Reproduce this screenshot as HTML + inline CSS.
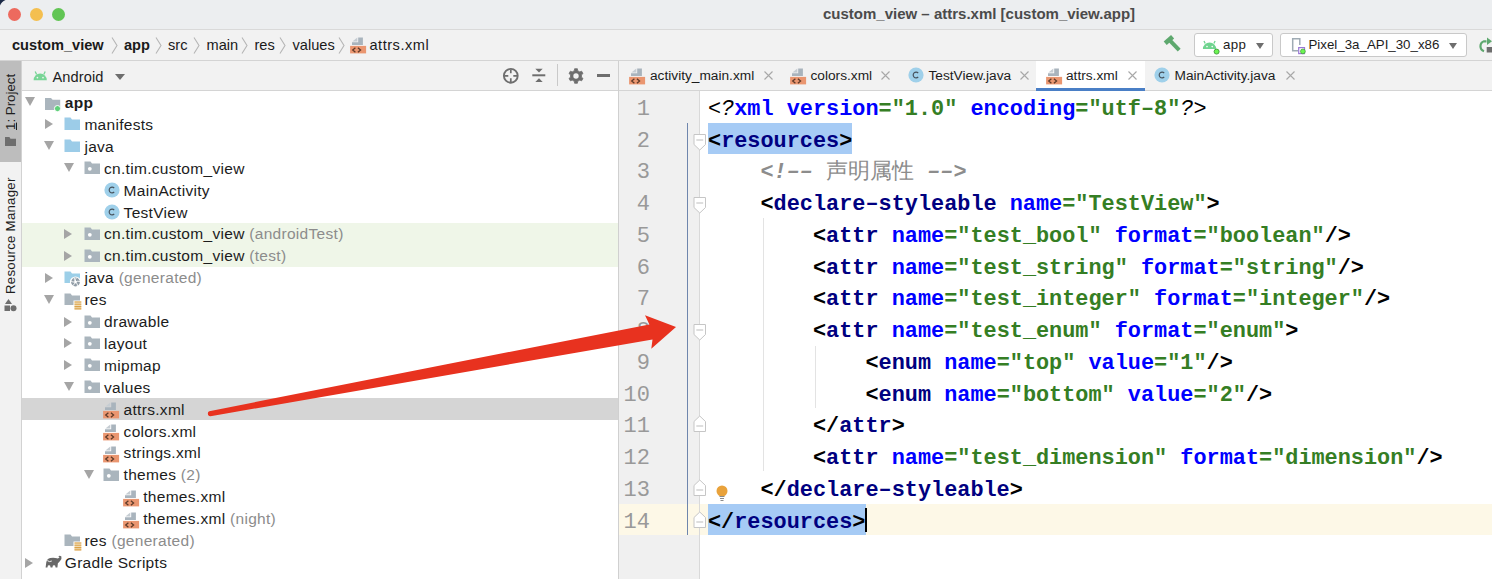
<!DOCTYPE html>
<html><head><meta charset="utf-8">
<style>
*{margin:0;padding:0;box-sizing:border-box}
html,body{width:1492px;height:579px;overflow:hidden}
body{position:relative;background:#fff;font-family:"Liberation Sans",sans-serif;color:#000}
.a{position:absolute}
.hl{position:absolute;height:1px}
.vl{position:absolute;width:1px}
/* title */
#title{left:0;top:0;width:1492px;height:30px;background:#eceef0}
.tl{position:absolute;top:7.7px;width:13px;height:13px;border-radius:50%}
#ttext{left:823px;top:3px;font-size:15px;font-weight:700;color:#4b4b4b;line-height:22px;white-space:pre}
/* nav */
#nav{left:0;top:30px;width:1492px;height:30px;background:#f2f2f2}
.bc{position:absolute;top:30px;height:30px;line-height:30px;font-size:14.6px;white-space:pre;color:#1a1a1a}
.chev{position:absolute;top:37px;width:7px;height:17px}
/* left strip */
#strip{left:0;top:61px;width:21px;height:518px;background:#f2f2f2}
/* panel header */
#phead{left:22px;top:61px;width:596px;height:29px;background:#f2f2f2}
#tree{left:22px;top:91px;width:596px;height:488px;background:#fff}
.row{position:absolute;left:22px;width:596px;height:22px}
.tt{position:absolute;font-size:15.5px;letter-spacing:0.3px;line-height:22px;white-space:pre;color:#1c1c1c}
.tt i{font-style:normal;color:#8c8c8c}
.arr{position:absolute;width:0;height:0}
.ad{border-left:5px solid transparent;border-right:5px solid transparent;border-top:9px solid #a5a5a5}
.ar{border-top:5px solid transparent;border-bottom:5px solid transparent;border-left:8px solid #a5a5a5}
.ic{position:absolute}
/* editor */
#tabs{left:619px;top:61px;width:873px;height:29px;background:#f2f2f2}
.tab{position:absolute;top:61px;height:29px;line-height:29px;font-size:13.7px;white-space:pre;color:#1c1c1c}
.x{position:absolute;top:71px;width:9px;height:9px}
#gutter{left:619px;top:91px;width:80px;height:488px;background:#f0f0f0}
.ln{position:absolute;left:619px;width:31px;text-align:right;font-family:"Liberation Mono",monospace;font-size:22px;font-weight:400;color:#999;line-height:31.75px;height:31.75px}
.code{position:absolute;left:708px;font-family:"Liberation Mono",monospace;font-size:21.875px;line-height:31.75px;height:31.75px;white-space:pre;color:#000;font-weight:700}
.p{font-weight:700}
.t{color:#000080}
.n{color:#0000ff}
.v{color:#357e24}
.c{color:#8c8c8c;font-style:italic;font-weight:700}
.it{font-style:italic;font-weight:400}
</style></head><body>

<!-- TITLE BAR -->
<div id="title" class="a"></div>
<svg class="a" style="left:0;top:0" width="8" height="8"><path d="M0 0H5.5Q1.5 1.5 0 5.5Z" fill="#1b2a47"/></svg>
<div class="tl" style="left:7.7px;background:#ed6a5e"></div>
<div class="tl" style="left:29.5px;background:#f4bf4f"></div>
<div class="tl" style="left:51.5px;background:#61c554"></div>
<div id="ttext" class="a">custom_view – attrs.xml [custom_view.app]</div>
<div class="hl" style="left:0;top:29px;width:1492px;background:#d9d9d9"></div>

<!-- NAV BAR -->
<div id="nav" class="a"></div>
<div class="bc" style="left:12px;font-weight:700">custom_view</div><svg class="a" style="left:110.5px;top:36px" width="8" height="19"><path d="M1 1.5L6 9.5L1 17.5" stroke="#b5b5b5" stroke-width="1.1" fill="none"/></svg><div class="bc" style="left:124px;font-weight:700">app</div><svg class="a" style="left:155px;top:36px" width="8" height="19"><path d="M1 1.5L6 9.5L1 17.5" stroke="#b5b5b5" stroke-width="1.1" fill="none"/></svg><div class="bc" style="left:168px">src</div><svg class="a" style="left:193px;top:36px" width="8" height="19"><path d="M1 1.5L6 9.5L1 17.5" stroke="#b5b5b5" stroke-width="1.1" fill="none"/></svg><div class="bc" style="left:206.5px">main</div><svg class="a" style="left:241px;top:36px" width="8" height="19"><path d="M1 1.5L6 9.5L1 17.5" stroke="#b5b5b5" stroke-width="1.1" fill="none"/></svg><div class="bc" style="left:254.5px">res</div><svg class="a" style="left:278.5px;top:36px" width="8" height="19"><path d="M1 1.5L6 9.5L1 17.5" stroke="#b5b5b5" stroke-width="1.1" fill="none"/></svg><div class="bc" style="left:292.5px">values</div><svg class="a" style="left:338px;top:36px" width="8" height="19"><path d="M1 1.5L6 9.5L1 17.5" stroke="#b5b5b5" stroke-width="1.1" fill="none"/></svg><svg class="a" style="left:350px;top:37px" width="17" height="17" viewBox="0 0 17 17"><path d="M8.2 0.4H12.9V8.1H2V5.2H8.2Z" fill="#a9b4bd"/><path d="M2.4 4.5L7.3 0.4V4.5Z" fill="#c6cdd3"/><rect x="0.1" y="8.9" width="16" height="7.5" fill="#ea9670"/><path d="M5.4 10.7L2.7 13L5.4 15.3M7.9 10.7L10.6 13L7.9 15.3" stroke="#5d3a28" stroke-width="1.25" fill="none"/></svg><div class="bc" style="left:369.5px;letter-spacing:0.5px">attrs.xml</div><svg class="a" style="left:1162px;top:34px" width="20" height="20" viewBox="0 0 20 20"><path d="M3.2 9.3L10.6 2.8" stroke="#5ea86e" stroke-width="4.6"/><path d="M8.3 6.8L17.2 16.2" stroke="#5ea86e" stroke-width="4"/></svg><div class="a" style="left:1193.5px;top:33px;width:79px;height:24px;background:#fff;border:1px solid #c9c9c9;border-radius:3px"></div><svg class="a" style="left:1200px;top:38px" width="22" height="18" viewBox="0 0 22 18"><path d="M2.9 11A6.65 6.4 0 0 1 16.2 11Z" fill="#6fd48f"/><path d="M5.2 5.5L4 3M13.9 5.5L15.1 3" stroke="#6fd48f" stroke-width="1.3"/><circle cx="7" cy="8.6" r="0.8" fill="#fff"/><circle cx="12.2" cy="8.6" r="0.8" fill="#fff"/><circle cx="16.6" cy="13.6" r="2.5" fill="#6cf552" stroke="#3f9a3a" stroke-width="0.9"/></svg><div class="a" style="left:1223px;top:33px;height:24px;line-height:24px;font-size:13.3px;letter-spacing:0.3px;color:#1c1c1c">app</div><div class="a" style="left:1255.5px;top:42.5px;border-left:4.5px solid transparent;border-right:4.5px solid transparent;border-top:6px solid #6e6e6e;width:0;height:0"></div><div class="a" style="left:1280px;top:33px;width:186.5px;height:24px;background:#fff;border:1px solid #c9c9c9;border-radius:3px"></div><svg class="a" style="left:1290px;top:36px" width="18" height="20" viewBox="0 0 18 20"><path d="M9.8 9V2.8H2.7V14.8H8" stroke="#9fabb4" stroke-width="1.5" fill="none"/><rect x="8.7" y="11.6" width="5.8" height="6" fill="#fff" stroke="#9a78d6" stroke-width="1.2"/><circle cx="12.9" cy="15.4" r="2.4" fill="#6cf552" stroke="#3f9a3a" stroke-width="0.7"/></svg><div class="a" style="left:1308.5px;top:33px;height:24px;line-height:24px;font-size:13.3px;color:#1c1c1c">Pixel_3a_API_30_x86</div><div class="a" style="left:1449px;top:42.5px;border-left:4.5px solid transparent;border-right:4.5px solid transparent;border-top:6px solid #6e6e6e;width:0;height:0"></div><svg class="a" style="left:1476px;top:36px" width="16" height="18" viewBox="0 0 16 18"><path d="M10.5 5.3H8A5.3 5.3 0 0 0 8 15.3" stroke="#5ea86e" stroke-width="2.2" fill="none"/><path d="M11 1.5L16 5.3L11 9Z" fill="#5ea86e"/><rect x="10.7" y="11" width="6" height="5.5" fill="#6e6e6e"/></svg>
<div class="hl" style="left:0;top:60px;width:1492px;background:#d4d4d4"></div>

<div id="strip" class="a"></div><div class="a" style="left:0;top:61px;width:21px;height:101px;background:#bdbdbd"></div><div class="vl" style="left:21px;top:61px;height:518px;background:#d2d2d2"></div><div class="a" style="left:2px;top:130px;width:58px;height:17px;transform-origin:0 0;transform:rotate(-90deg);font-size:13.3px;line-height:17px;color:#1e1e1e;white-space:pre"><u>1</u>: Project</div><div class="a" style="left:5px;top:137px;width:11px;height:9px;background:#6e6e6e;clip-path:polygon(0 0,40% 0,50% 20%,100% 20%,100% 100%,0 100%)"></div><div class="a" style="left:2px;top:294px;width:117px;height:17px;transform-origin:0 0;transform:rotate(-90deg);font-size:13.3px;line-height:17px;color:#1e1e1e;white-space:pre;letter-spacing:0.22px">Resource Manager</div><svg class="a" style="left:4px;top:299px" width="13" height="13" viewBox="0 0 13 13"><path d="M4.5 0L8 5H1Z" fill="#6e6e6e"/><rect x="0.5" y="6.5" width="5.5" height="5.5" fill="#6e6e6e"/><circle cx="9.5" cy="9.3" r="3" fill="#6e6e6e"/></svg><div id="phead" class="a"></div><div class="hl" style="left:22px;top:90px;width:597px;background:#d4d4d4"></div><svg class="a" style="left:32.5px;top:70px" width="15" height="11" viewBox="0 0 15 11"><path d="M0.6 10.2A6.6 6.6 0 0 1 13.8 10.2Z" fill="#78d596"/><path d="M3.6 4.6L2.2 1.6M10.8 4.6L12.2 1.6" stroke="#78d596" stroke-width="1.3"/><circle cx="4.4" cy="7.6" r="0.85" fill="#f2f2f2"/><circle cx="10" cy="7.6" r="0.85" fill="#f2f2f2"/></svg><div class="a" style="left:52.5px;top:62.5px;height:29px;line-height:29px;font-size:14.6px;letter-spacing:0.1px;color:#1c1c1c">Android</div><div class="a" style="left:114.5px;top:74px;border-left:5px solid transparent;border-right:5px solid transparent;border-top:6px solid #6e6e6e;width:0;height:0"></div><svg class="a" style="left:502px;top:66.5px" width="18" height="18" viewBox="0 0 18 18"><circle cx="8.8" cy="8.8" r="6.9" stroke="#6e6e6e" stroke-width="1.9" fill="none"/><path d="M8.8 2.5V6.3M8.8 11.3V15.1M2.5 8.8H6.3M11.3 8.8H15.1" stroke="#6e6e6e" stroke-width="1.7"/></svg><svg class="a" style="left:531px;top:67px" width="16" height="17" viewBox="0 0 16 17"><path d="M1.3 8.3H14.3" stroke="#6e6e6e" stroke-width="2"/><path d="M4.3 1.8H11.7L8 5.6Z" fill="#6e6e6e"/><path d="M8 11.2L11.7 15H4.3Z" fill="#6e6e6e"/></svg><div class="vl" style="left:557px;top:64px;height:22px;background:#c9c9c9"></div><svg class="a" style="left:567.5px;top:67.5px" width="16" height="16" viewBox="0 0 16 16"><path d="M6.36 2.64L6.59 0.74L9.41 0.74L9.64 2.64L11.82 3.90L13.58 3.15L15.00 5.59L13.46 6.74L13.46 9.26L15.00 10.41L13.58 12.85L11.82 12.10L9.64 13.36L9.41 15.26L6.59 15.26L6.36 13.36L4.18 12.10L2.42 12.85L1.00 10.41L2.54 9.26L2.54 6.74L1.00 5.59L2.42 3.15L4.18 3.90Z" fill="#6e6e6e" stroke="#6e6e6e" stroke-width="0.8" stroke-linejoin="round"/><circle cx="8" cy="8" r="2.7" fill="#f2f2f2"/></svg><div class="a" style="left:597px;top:74.2px;width:13.2px;height:2.4px;background:#6e6e6e"></div><div id="tabs" class="a"></div><div class="vl" style="left:618px;top:61px;height:518px;background:#d0d0d0"></div><div id="tree" class="a"></div>
<!--TREE-->
<div class="arr ad" style="left:24.8px;top:97.40px"></div><svg class="a" style="left:44.5px;top:95.5px" width="18" height="17" viewBox="0 0 18 17"><path d="M0 2H6L7.6 3.8H15.2V14H0Z" fill="#aab5bd"/><circle cx="12.5" cy="12.6" r="3.1" fill="#5fd07a" stroke="#fff" stroke-width="1"/></svg><div class="tt" style="left:64.8px;top:92.00px"><b>app</b></div>
<div class="arr ar" style="left:44.5px;top:119.41px"></div><svg class="a" style="left:64.1px;top:117.41px" width="17" height="14" viewBox="0 0 17 14"><path d="M0.5 0.5H6.5L8 2.5H16V13H0.5Z" fill="#9ccce8"/></svg><div class="tt" style="left:84.4px;top:113.91px">manifests</div>
<div class="arr ad" style="left:44.4px;top:141.21px"></div><svg class="a" style="left:64.1px;top:139.31px" width="17" height="14" viewBox="0 0 17 14"><path d="M0.5 0.5H6.5L8 2.5H16V13H0.5Z" fill="#9ccce8"/></svg><div class="tt" style="left:84.4px;top:135.81px">java</div>
<div class="arr ad" style="left:64.0px;top:163.12px"></div><svg class="a" style="left:83.7px;top:161.22px" width="17" height="14" viewBox="0 0 17 14"><path d="M0.5 0.5H6.5L8 2.5H16V13H0.5Z" fill="#aab5bd"/><circle cx="5.8" cy="7.8" r="1.9" fill="#fff"/></svg><div class="tt" style="left:104.0px;top:157.72px">cn.tim.custom_view</div>
<svg class="a" style="left:104.0px;top:182.22px" width="16" height="16" viewBox="0 0 16 16"><circle cx="8" cy="8" r="7.6" fill="#9fd0ea"/><path d="M10.2 6A2.9 2.9 0 1 0 10.2 10" stroke="#46525c" stroke-width="1.2" fill="none"/></svg><div class="tt" style="left:123.6px;top:179.62px">MainActivity</div>
<svg class="a" style="left:104.0px;top:204.12px" width="16" height="16" viewBox="0 0 16 16"><circle cx="8" cy="8" r="7.6" fill="#9fd0ea"/><path d="M10.2 6A2.9 2.9 0 1 0 10.2 10" stroke="#46525c" stroke-width="1.2" fill="none"/></svg><div class="tt" style="left:123.6px;top:201.53px">TestView</div>
<div class="a" style="left:22px;top:223.43px;width:596px;height:22px;background:#eff6e8"></div><div class="arr ar" style="left:64.1px;top:228.93px"></div><svg class="a" style="left:83.7px;top:226.93px" width="17" height="14" viewBox="0 0 17 14"><path d="M0.5 0.5H6.5L8 2.5H16V13H0.5Z" fill="#aab5bd"/><circle cx="5.8" cy="7.8" r="1.9" fill="#fff"/></svg><div class="tt" style="left:104.0px;top:223.43px">cn.tim.custom_view<i> (androidTest)</i></div>
<div class="a" style="left:22px;top:245.34px;width:596px;height:22px;background:#eff6e8"></div><div class="arr ar" style="left:64.1px;top:250.84px"></div><svg class="a" style="left:83.7px;top:248.84px" width="17" height="14" viewBox="0 0 17 14"><path d="M0.5 0.5H6.5L8 2.5H16V13H0.5Z" fill="#aab5bd"/><circle cx="5.8" cy="7.8" r="1.9" fill="#fff"/></svg><div class="tt" style="left:104.0px;top:245.34px">cn.tim.custom_view<i> (test)</i></div>
<div class="arr ar" style="left:44.5px;top:272.74px"></div><svg class="a" style="left:64.1px;top:270.74px" width="18" height="17" viewBox="0 0 18 17"><path d="M0.5 0.5H6.5L8 2.5H16V12H0.5Z" fill="#9ccfe8"/><circle cx="11.5" cy="11" r="5.6" fill="#fff"/><circle cx="11.5" cy="11" r="4.4" fill="#8f9ba5"/><path d="M11.5 11Q11 8 12.5 6.6M11.5 11Q14 9.5 15.9 10.6M11.5 11Q14 13 13.4 15.1M11.5 11Q10.5 14 8.6 14.6M11.5 11Q8.5 11.5 7 10M11.5 11Q10 8.5 10.3 6.7" stroke="#fff" stroke-width="0.9" fill="none"/><circle cx="11.5" cy="11" r="1.2" fill="#fff"/></svg><div class="tt" style="left:84.4px;top:267.24px">java<i> (generated)</i></div>
<div class="arr ad" style="left:44.4px;top:294.54px"></div><svg class="a" style="left:64.1px;top:292.64px" width="18" height="17" viewBox="0 0 18 17"><path d="M0.5 0.5H6.5L8 2.5H16V12H0.5Z" fill="#aab5bd"/><rect x="9.5" y="7.5" width="8" height="9" fill="#fff"/><rect x="10.5" y="8.3" width="6.8" height="8" fill="#f1dcb4"/><path d="M10.5 9H17.3M10.5 11.3H17.3M10.5 13.6H17.3M10.5 15.9H17.3" stroke="#dba24a" stroke-width="1.1"/></svg><div class="tt" style="left:84.4px;top:289.14px">res</div>
<div class="arr ar" style="left:64.1px;top:316.55px"></div><svg class="a" style="left:83.7px;top:314.55px" width="17" height="14" viewBox="0 0 17 14"><path d="M0.5 0.5H6.5L8 2.5H16V13H0.5Z" fill="#aab5bd"/><circle cx="5.8" cy="7.8" r="1.9" fill="#fff"/></svg><div class="tt" style="left:104.0px;top:311.05px">drawable</div>
<div class="arr ar" style="left:64.1px;top:338.46px"></div><svg class="a" style="left:83.7px;top:336.46px" width="17" height="14" viewBox="0 0 17 14"><path d="M0.5 0.5H6.5L8 2.5H16V13H0.5Z" fill="#aab5bd"/><circle cx="5.8" cy="7.8" r="1.9" fill="#fff"/></svg><div class="tt" style="left:104.0px;top:332.96px">layout</div>
<div class="arr ar" style="left:64.1px;top:360.36px"></div><svg class="a" style="left:83.7px;top:358.36px" width="17" height="14" viewBox="0 0 17 14"><path d="M0.5 0.5H6.5L8 2.5H16V13H0.5Z" fill="#aab5bd"/><circle cx="5.8" cy="7.8" r="1.9" fill="#fff"/></svg><div class="tt" style="left:104.0px;top:354.86px">mipmap</div>
<div class="arr ad" style="left:64.0px;top:382.16px"></div><svg class="a" style="left:83.7px;top:380.26px" width="17" height="14" viewBox="0 0 17 14"><path d="M0.5 0.5H6.5L8 2.5H16V13H0.5Z" fill="#aab5bd"/><circle cx="5.8" cy="7.8" r="1.9" fill="#fff"/></svg><div class="tt" style="left:104.0px;top:376.76px">values</div>
<div class="a" style="left:22px;top:398.40px;width:596px;height:21.5px;background:#d5d5d5"></div><svg class="a" style="left:103.3px;top:402.17px" width="17" height="17" viewBox="0 0 17 17"><path d="M8.2 0.4H12.9V8.1H2V5.2H8.2Z" fill="#a9b4bd"/><path d="M2.4 4.5L7.3 0.4V4.5Z" fill="#c6cdd3"/><rect x="0.1" y="8.9" width="16" height="7.5" fill="#ea9670"/><path d="M5.4 10.7L2.7 13L5.4 15.3M7.9 10.7L10.6 13L7.9 15.3" stroke="#5d3a28" stroke-width="1.25" fill="none"/></svg><div class="tt" style="left:123.6px;top:398.67px">attrs.xml</div>
<svg class="a" style="left:103.3px;top:424.08px" width="17" height="17" viewBox="0 0 17 17"><path d="M8.2 0.4H12.9V8.1H2V5.2H8.2Z" fill="#a9b4bd"/><path d="M2.4 4.5L7.3 0.4V4.5Z" fill="#c6cdd3"/><rect x="0.1" y="8.9" width="16" height="7.5" fill="#ea9670"/><path d="M5.4 10.7L2.7 13L5.4 15.3M7.9 10.7L10.6 13L7.9 15.3" stroke="#5d3a28" stroke-width="1.25" fill="none"/></svg><div class="tt" style="left:123.6px;top:420.58px">colors.xml</div>
<svg class="a" style="left:103.3px;top:445.98px" width="17" height="17" viewBox="0 0 17 17"><path d="M8.2 0.4H12.9V8.1H2V5.2H8.2Z" fill="#a9b4bd"/><path d="M2.4 4.5L7.3 0.4V4.5Z" fill="#c6cdd3"/><rect x="0.1" y="8.9" width="16" height="7.5" fill="#ea9670"/><path d="M5.4 10.7L2.7 13L5.4 15.3M7.9 10.7L10.6 13L7.9 15.3" stroke="#5d3a28" stroke-width="1.25" fill="none"/></svg><div class="tt" style="left:123.6px;top:442.48px">strings.xml</div>
<div class="arr ad" style="left:83.6px;top:469.78px"></div><svg class="a" style="left:103.3px;top:467.88px" width="17" height="14" viewBox="0 0 17 14"><path d="M0.5 0.5H6.5L8 2.5H16V13H0.5Z" fill="#aab5bd"/><circle cx="5.8" cy="7.8" r="1.9" fill="#fff"/></svg><div class="tt" style="left:123.6px;top:464.38px">themes<i> (2)</i></div>
<svg class="a" style="left:122.9px;top:489.79px" width="17" height="17" viewBox="0 0 17 17"><path d="M8.2 0.4H12.9V8.1H2V5.2H8.2Z" fill="#a9b4bd"/><path d="M2.4 4.5L7.3 0.4V4.5Z" fill="#c6cdd3"/><rect x="0.1" y="8.9" width="16" height="7.5" fill="#ea9670"/><path d="M5.4 10.7L2.7 13L5.4 15.3M7.9 10.7L10.6 13L7.9 15.3" stroke="#5d3a28" stroke-width="1.25" fill="none"/></svg><div class="tt" style="left:143.2px;top:486.29px">themes.xml</div>
<svg class="a" style="left:122.9px;top:511.7px" width="17" height="17" viewBox="0 0 17 17"><path d="M8.2 0.4H12.9V8.1H2V5.2H8.2Z" fill="#a9b4bd"/><path d="M2.4 4.5L7.3 0.4V4.5Z" fill="#c6cdd3"/><rect x="0.1" y="8.9" width="16" height="7.5" fill="#ea9670"/><path d="M5.4 10.7L2.7 13L5.4 15.3M7.9 10.7L10.6 13L7.9 15.3" stroke="#5d3a28" stroke-width="1.25" fill="none"/></svg><div class="tt" style="left:143.2px;top:508.20px">themes.xml<i> (night)</i></div>
<svg class="a" style="left:64.1px;top:533.6px" width="18" height="17" viewBox="0 0 18 17"><path d="M0.5 0.5H6.5L8 2.5H16V12H0.5Z" fill="#aab5bd"/><rect x="9.5" y="7.5" width="8" height="9" fill="#fff"/><rect x="10.5" y="8.3" width="6.8" height="8" fill="#f1dcb4"/><path d="M10.5 9H17.3M10.5 11.3H17.3M10.5 13.6H17.3M10.5 15.9H17.3" stroke="#dba24a" stroke-width="1.1"/></svg><div class="tt" style="left:84.4px;top:530.10px">res<i> (generated)</i></div>
<div class="arr ar" style="left:24.9px;top:557.50px"></div><svg class="a" style="left:44.5px;top:554.5px" width="18" height="14" viewBox="0 0 18 14"><path d="M0.6 12.4L1.3 7.2Q2.2 3.6 5.2 3Q9 2.3 12 3.3Q13.6 3.7 14.3 2.6L14.4 1.9Q13.6 1.6 13.1 1.3Q15 0.2 16.4 1.6Q17 3.5 15.2 5.8Q13.9 7.3 12.9 8.3L12.4 12.4H10.6L10.1 10.6Q9 10.1 7.9 10.6L7.4 12.4H5.6L5.1 10.6Q4 10.1 2.9 10.6L2.4 12.4Z" fill="#676767"/><path d="M2.3 5.6Q4.5 7.4 6.8 6" stroke="#fff" stroke-width="0.9" fill="none"/></svg><div class="tt" style="left:64.8px;top:552.00px">Gradle Scripts</div>
<!--/TREE-->
<!--ED-->
<div class="a" style="left:1036px;top:61px;width:109px;height:29px;background:#fff"></div><div class="hl" style="left:619px;top:90px;width:873px;background:#d4d4d4"></div><div class="a" style="left:1036px;top:87.5px;width:109px;height:3.5px;background:#4a7fc6"></div><svg class="a" style="left:629px;top:67.5px" width="17" height="17" viewBox="0 0 17 17"><path d="M8.2 0.4H12.9V8.1H2V5.2H8.2Z" fill="#a9b4bd"/><path d="M2.4 4.5L7.3 0.4V4.5Z" fill="#c6cdd3"/><rect x="0.1" y="8.9" width="16" height="7.5" fill="#ea9670"/><path d="M5.4 10.7L2.7 13L5.4 15.3M7.9 10.7L10.6 13L7.9 15.3" stroke="#5d3a28" stroke-width="1.25" fill="none"/></svg><div class="tab" style="left:650px">activity_main.xml</div><svg class="a" style="left:763.5px;top:71px" width="9" height="9" viewBox="0 0 9 9"><path d="M0.5 0.5L8.5 8.5M8.5 0.5L0.5 8.5" stroke="#a8a8a8" stroke-width="1.1"/></svg><svg class="a" style="left:789.5px;top:67.5px" width="17" height="17" viewBox="0 0 17 17"><path d="M8.2 0.4H12.9V8.1H2V5.2H8.2Z" fill="#a9b4bd"/><path d="M2.4 4.5L7.3 0.4V4.5Z" fill="#c6cdd3"/><rect x="0.1" y="8.9" width="16" height="7.5" fill="#ea9670"/><path d="M5.4 10.7L2.7 13L5.4 15.3M7.9 10.7L10.6 13L7.9 15.3" stroke="#5d3a28" stroke-width="1.25" fill="none"/></svg><div class="tab" style="left:810.5px">colors.xml</div><svg class="a" style="left:881.3px;top:71px" width="9" height="9" viewBox="0 0 9 9"><path d="M0.5 0.5L8.5 8.5M8.5 0.5L0.5 8.5" stroke="#a8a8a8" stroke-width="1.1"/></svg><svg class="a" style="left:907.7px;top:67.1px" width="16" height="16" viewBox="0 0 16 16"><circle cx="8" cy="8" r="7.6" fill="#9fd0ea"/><path d="M10.2 6A2.9 2.9 0 1 0 10.2 10" stroke="#46525c" stroke-width="1.2" fill="none"/></svg><div class="tab" style="left:928.5px">TestView.java</div><svg class="a" style="left:1019.8px;top:71px" width="9" height="9" viewBox="0 0 9 9"><path d="M0.5 0.5L8.5 8.5M8.5 0.5L0.5 8.5" stroke="#a8a8a8" stroke-width="1.1"/></svg><svg class="a" style="left:1046px;top:67.5px" width="17" height="17" viewBox="0 0 17 17"><path d="M8.2 0.4H12.9V8.1H2V5.2H8.2Z" fill="#a9b4bd"/><path d="M2.4 4.5L7.3 0.4V4.5Z" fill="#c6cdd3"/><rect x="0.1" y="8.9" width="16" height="7.5" fill="#ea9670"/><path d="M5.4 10.7L2.7 13L5.4 15.3M7.9 10.7L10.6 13L7.9 15.3" stroke="#5d3a28" stroke-width="1.25" fill="none"/></svg><div class="tab" style="left:1066px">attrs.xml</div><svg class="a" style="left:1128px;top:71px" width="9" height="9" viewBox="0 0 9 9"><path d="M0.5 0.5L8.5 8.5M8.5 0.5L0.5 8.5" stroke="#a8a8a8" stroke-width="1.1"/></svg><svg class="a" style="left:1153.7px;top:67.1px" width="16" height="16" viewBox="0 0 16 16"><circle cx="8" cy="8" r="7.6" fill="#9fd0ea"/><path d="M10.2 6A2.9 2.9 0 1 0 10.2 10" stroke="#46525c" stroke-width="1.2" fill="none"/></svg><div class="tab" style="left:1174.5px">MainActivity.java</div><svg class="a" style="left:1285.5px;top:71px" width="9" height="9" viewBox="0 0 9 9"><path d="M0.5 0.5L8.5 8.5M8.5 0.5L0.5 8.5" stroke="#a8a8a8" stroke-width="1.1"/></svg><div class="a" style="left:619px;top:91px;width:81px;height:488px;background:#f0f0f0"></div><div class="a" style="left:619px;top:503.50px;width:873px;height:31.75px;background:#fdf8e7"></div><div class="vl" style="left:699px;top:91px;height:488px;background:#d9d9d9"></div><div class="vl" style="left:687px;top:122.5px;height:412.75px;background:#6f86ad"></div><div class="a" style="left:708px;top:122.50px;width:144.38px;height:31.75px;background:#a6cbf5"></div><div class="a" style="left:708px;top:503.50px;width:157.50px;height:31.75px;background:#a6cbf5"></div><div class="vl" style="left:763px;top:218px;height:253px;background:#e3e3e3"></div><div class="vl" style="left:815px;top:346px;height:62px;background:#e3e3e3"></div><div class="ln" style="top:93.75px">1</div><div class="ln" style="top:125.50px">2</div><div class="ln" style="top:157.25px">3</div><div class="ln" style="top:189.00px">4</div><div class="ln" style="top:220.75px">5</div><div class="ln" style="top:252.50px">6</div><div class="ln" style="top:284.25px">7</div><div class="ln" style="top:316.00px">8</div><div class="ln" style="top:347.75px">9</div><div class="ln" style="top:379.50px">10</div><div class="ln" style="top:411.25px">11</div><div class="ln" style="top:443.00px">12</div><div class="ln" style="top:474.75px">13</div><div class="ln" style="top:506.50px">14</div><svg class="a" style="left:692.5px;top:133.5px" width="14" height="17" viewBox="0 0 14 17"><path d="M1 0.5H12.5V10.5L6.75 16L1 10.5Z" fill="#fff" stroke="#c6c6c6" stroke-width="1"/><path d="M3.3 6H10.2" stroke="#bdbdbd" stroke-width="1"/></svg><svg class="a" style="left:692.5px;top:197.0px" width="14" height="17" viewBox="0 0 14 17"><path d="M1 0.5H12.5V10.5L6.75 16L1 10.5Z" fill="#fff" stroke="#c6c6c6" stroke-width="1"/><path d="M3.3 6H10.2" stroke="#bdbdbd" stroke-width="1"/></svg><svg class="a" style="left:692.5px;top:324.0px" width="14" height="17" viewBox="0 0 14 17"><path d="M1 0.5H12.5V10.5L6.75 16L1 10.5Z" fill="#fff" stroke="#c6c6c6" stroke-width="1"/><path d="M3.3 6H10.2" stroke="#bdbdbd" stroke-width="1"/></svg><svg class="a" style="left:692.5px;top:415.25px" width="14" height="17" viewBox="0 0 14 17"><path d="M1 16.5H12.5V6.5L6.75 1L1 6.5Z" fill="#fff" stroke="#c6c6c6" stroke-width="1"/><path d="M3.3 11H10.2" stroke="#bdbdbd" stroke-width="1"/></svg><svg class="a" style="left:692.5px;top:478.75px" width="14" height="17" viewBox="0 0 14 17"><path d="M1 16.5H12.5V6.5L6.75 1L1 6.5Z" fill="#fff" stroke="#c6c6c6" stroke-width="1"/><path d="M3.3 11H10.2" stroke="#bdbdbd" stroke-width="1"/></svg><svg class="a" style="left:692.5px;top:510.5px" width="14" height="17" viewBox="0 0 14 17"><path d="M1 16.5H12.5V6.5L6.75 1L1 6.5Z" fill="#fff" stroke="#c6c6c6" stroke-width="1"/><path d="M3.3 11H10.2" stroke="#bdbdbd" stroke-width="1"/></svg><svg class="a" style="left:715px;top:484.75px" width="14" height="17" viewBox="0 0 14 17"><circle cx="7" cy="6" r="5.5" fill="#e9a23b"/><path d="M4.5 11.5H9.5M5 13.5H9M5.5 15.5H8.5" stroke="#8a8a8a" stroke-width="1"/></svg><div class="code" style="top:93.75px"><span class="it">&lt;?</span><span class="n">xml</span> <span class="n">version</span><span class="v">="1.0"</span> <span class="n">encoding</span><span class="v">="utf–8"</span><span class="it">?&gt;</span></div>
<div class="code" style="top:125.50px"><span class="p">&lt;</span><span class="t">resources</span><span class="p">&gt;</span></div>
<div class="code" style="top:157.25px">    <span class="c">&lt;!–– <span style="font-style:normal;font-weight:500">声明属性</span> ––&gt;</span></div>
<div class="code" style="top:189.00px">    <span class="p">&lt;</span><span class="t">declare–styleable</span> <span class="n">name</span><span class="v">="TestView"</span><span class="p">&gt;</span></div>
<div class="code" style="top:220.75px">        <span class="p">&lt;</span><span class="t">attr</span> <span class="n">name</span><span class="v">="test_bool"</span> <span class="n">format</span><span class="v">="boolean"</span><span class="p">/&gt;</span></div>
<div class="code" style="top:252.50px">        <span class="p">&lt;</span><span class="t">attr</span> <span class="n">name</span><span class="v">="test_string"</span> <span class="n">format</span><span class="v">="string"</span><span class="p">/&gt;</span></div>
<div class="code" style="top:284.25px">        <span class="p">&lt;</span><span class="t">attr</span> <span class="n">name</span><span class="v">="test_integer"</span> <span class="n">format</span><span class="v">="integer"</span><span class="p">/&gt;</span></div>
<div class="code" style="top:316.00px">        <span class="p">&lt;</span><span class="t">attr</span> <span class="n">name</span><span class="v">="test_enum"</span> <span class="n">format</span><span class="v">="enum"</span><span class="p">&gt;</span></div>
<div class="code" style="top:347.75px">            <span class="p">&lt;</span><span class="t">enum</span> <span class="n">name</span><span class="v">="top"</span> <span class="n">value</span><span class="v">="1"</span><span class="p">/&gt;</span></div>
<div class="code" style="top:379.50px">            <span class="p">&lt;</span><span class="t">enum</span> <span class="n">name</span><span class="v">="bottom"</span> <span class="n">value</span><span class="v">="2"</span><span class="p">/&gt;</span></div>
<div class="code" style="top:411.25px">        <span class="p">&lt;/</span><span class="t">attr</span><span class="p">&gt;</span></div>
<div class="code" style="top:443.00px">        <span class="p">&lt;</span><span class="t">attr</span> <span class="n">name</span><span class="v">="test_dimension"</span> <span class="n">format</span><span class="v">="dimension"</span><span class="p">/&gt;</span></div>
<div class="code" style="top:474.75px">    <span class="p">&lt;/</span><span class="t">declare–styleable</span><span class="p">&gt;</span></div>
<div class="code" style="top:506.50px"><span class="p">&lt;/</span><span class="t">resources</span><span class="p">&gt;</span></div>
<div class="a" style="left:865px;top:507.50px;width:2px;height:24px;background:#000"></div><svg class="a" style="left:0;top:0" width="1492" height="579" viewBox="0 0 1492 579"><path d="M210.5 410.9L649.4 324.4L645 315.3L676 327L651.3 348.7L652.5 339.4L210.5 416.2A2.65 2.65 0 0 1 210.5 410.9Z" fill="#e8321f"/></svg><!--/ED-->
</body></html>
